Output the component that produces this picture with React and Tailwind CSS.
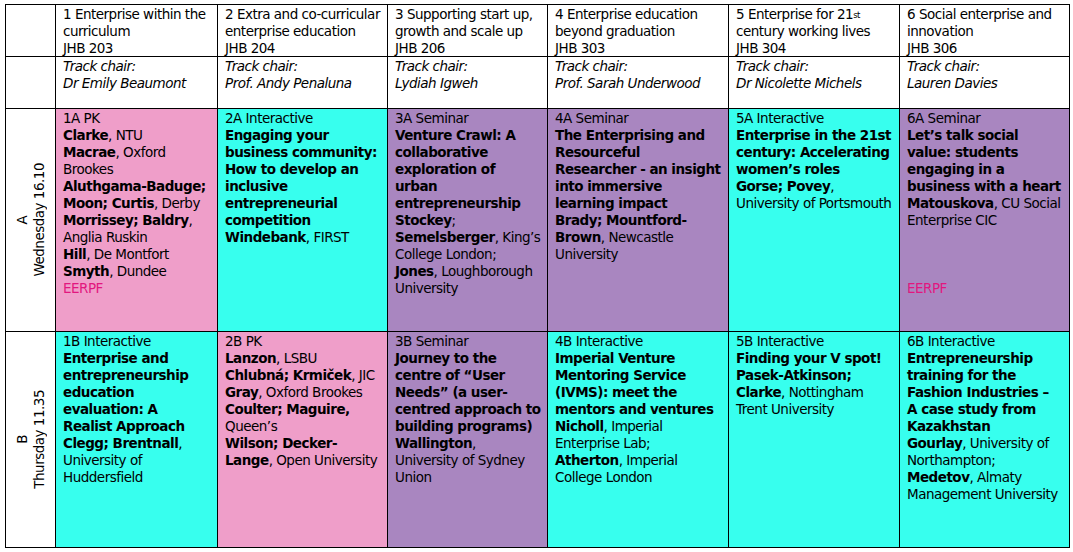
import React from "react";

const L = ({ children }) => <div className="whitespace-nowrap">{children}</div>;

const Cell = ({ bg, children, italic }) => (
  <div className={`${bg} pl-[7px] pr-[1px] pt-[1px] leading-[17px] overflow-hidden ${italic ? "italic" : ""}`}>
    {children}
  </div>
);

const Label = ({ a, b }) => (
  <div className="bg-white flex items-center justify-center">
    <div className="[writing-mode:vertical-rl] rotate-180 text-center leading-[17px] whitespace-nowrap">
      <div>{a}</div>
      <div>{b}</div>
    </div>
  </div>
);

const E = () => <div className="text-[#e2177f]">EERPF</div>;

const PINK = "bg-[#ef9ec9]";
const CYAN = "bg-[#37ffee]";
const PURPLE = "bg-[#a986c0]";
const WHITE = "bg-white";

export default function App() {
  return (
    <div className="w-[1073px] h-[552px] bg-white pt-[4px] pl-[5px] text-[13.5px] tracking-[-0.5px] text-black font-['DejaVu_Sans',sans-serif]">
      <div className="grid w-fit grid-cols-[49px_161px_169px_159px_180px_170px_169px] grid-rows-[51px_51px_222px_215px] gap-px bg-black border border-black">
        {/* header row */}
        <div className="bg-white" />
        <Cell bg={WHITE}>
          <L>1 Enterprise within the</L>
          <L>curriculum</L>
          <L>JHB 203</L>
        </Cell>
        <Cell bg={WHITE}>
          <L>2 Extra and co-curricular</L>
          <L>enterprise education</L>
          <L>JHB 204</L>
        </Cell>
        <Cell bg={WHITE}>
          <L>3 Supporting start up,</L>
          <L>growth and scale up</L>
          <L>JHB 206</L>
        </Cell>
        <Cell bg={WHITE}>
          <L>4 Enterprise education</L>
          <L>beyond graduation</L>
          <L>JHB 303</L>
        </Cell>
        <Cell bg={WHITE}>
          <L>
            5 Enterprise for 21<sup className="text-[8.5px] relative top-[-1px]">st</sup>
          </L>
          <L>century working lives</L>
          <L>JHB 304</L>
        </Cell>
        <Cell bg={WHITE}>
          <L>6 Social enterprise and</L>
          <L>innovation</L>
          <L>JHB 306</L>
        </Cell>

        {/* track chairs */}
        <div className="bg-white" />
        <Cell bg={WHITE} italic>
          <L>Track chair:</L>
          <L>Dr Emily Beaumont</L>
        </Cell>
        <Cell bg={WHITE} italic>
          <L>Track chair:</L>
          <L>Prof. Andy Penaluna</L>
        </Cell>
        <Cell bg={WHITE} italic>
          <L>Track chair:</L>
          <L>Lydiah Igweh</L>
        </Cell>
        <Cell bg={WHITE} italic>
          <L>Track chair:</L>
          <L>Prof. Sarah Underwood</L>
        </Cell>
        <Cell bg={WHITE} italic>
          <L>Track chair:</L>
          <L>Dr Nicolette Michels</L>
        </Cell>
        <Cell bg={WHITE} italic>
          <L>Track chair:</L>
          <L>Lauren Davies</L>
        </Cell>

        {/* Row A */}
        <Label a="A" b="Wednesday 16.10" />
        <Cell bg={PINK}>
          <L>1A PK</L>
          <L><b>Clarke</b>, NTU</L>
          <L><b>Macrae</b>, Oxford</L>
          <L>Brookes</L>
          <L><b>Aluthgama-Baduge;</b></L>
          <L><b>Moon; Curtis</b>, Derby</L>
          <L><b>Morrissey; Baldry</b>,</L>
          <L>Anglia Ruskin</L>
          <L><b>Hill</b>, De Montfort</L>
          <L><b>Smyth</b>, Dundee</L>
          <E />
        </Cell>
        <Cell bg={CYAN}>
          <L>2A Interactive</L>
          <L><b>Engaging your</b></L>
          <L><b>business community:</b></L>
          <L><b>How to develop an</b></L>
          <L><b>inclusive</b></L>
          <L><b>entrepreneurial</b></L>
          <L><b>competition</b></L>
          <L><b>Windebank</b>, FIRST</L>
        </Cell>
        <Cell bg={PURPLE}>
          <L>3A Seminar</L>
          <L><b>Venture Crawl: A</b></L>
          <L><b>collaborative</b></L>
          <L><b>exploration of</b></L>
          <L><b>urban</b></L>
          <L><b>entrepreneurship</b></L>
          <L><b>Stockey</b>;</L>
          <L><b>Semelsberger</b>, King’s</L>
          <L>College London;</L>
          <L><b>Jones</b>, Loughborough</L>
          <L>University</L>
        </Cell>
        <Cell bg={PURPLE}>
          <L>4A Seminar</L>
          <L><b>The Enterprising and</b></L>
          <L><b>Resourceful</b></L>
          <L><b>Researcher - an insight</b></L>
          <L><b>into immersive</b></L>
          <L><b>learning impact</b></L>
          <L><b>Brady; Mountford-</b></L>
          <L><b>Brown</b>, Newcastle</L>
          <L>University</L>
        </Cell>
        <Cell bg={CYAN}>
          <L>5A Interactive</L>
          <L><b>Enterprise in the 21st</b></L>
          <L><b>century: Accelerating</b></L>
          <L><b>women’s roles</b></L>
          <L><b>Gorse; Povey</b>,</L>
          <L>University of Portsmouth</L>
        </Cell>
        <Cell bg={PURPLE}>
          <L>6A Seminar</L>
          <L><b>Let’s talk social</b></L>
          <L><b>value: students</b></L>
          <L><b>engaging in a</b></L>
          <L><b>business with a heart</b></L>
          <L><b>Matouskova</b>, CU Social</L>
          <L>Enterprise CIC</L>
          <div className="h-[51px]" />
          <E />
        </Cell>

        {/* Row B */}
        <Label a="B" b="Thursday 11.35" />
        <Cell bg={CYAN}>
          <L>1B Interactive</L>
          <L><b>Enterprise and</b></L>
          <L><b>entrepreneurship</b></L>
          <L><b>education</b></L>
          <L><b>evaluation: A</b></L>
          <L><b>Realist Approach</b></L>
          <L><b>Clegg; Brentnall</b>,</L>
          <L>University of</L>
          <L>Huddersfield</L>
        </Cell>
        <Cell bg={PINK}>
          <L>2B PK</L>
          <L><b>Lanzon</b>, LSBU</L>
          <L><b>Chlubná; Krmiček</b>, JIC</L>
          <L><b>Gray</b>, Oxford Brookes</L>
          <L><b>Coulter; Maguire,</b></L>
          <L>Queen’s</L>
          <L><b>Wilson; Decker-</b></L>
          <L><b>Lange</b>, Open University</L>
        </Cell>
        <Cell bg={PURPLE}>
          <L>3B Seminar</L>
          <L><b>Journey to the</b></L>
          <L><b>centre of “User</b></L>
          <L><b>Needs” (a user-</b></L>
          <L><b>centred approach to</b></L>
          <L><b>building programs)</b></L>
          <L><b>Wallington</b>,</L>
          <L>University of Sydney</L>
          <L>Union</L>
        </Cell>
        <Cell bg={CYAN}>
          <L>4B Interactive</L>
          <L><b>Imperial Venture</b></L>
          <L><b>Mentoring Service</b></L>
          <L><b>(IVMS): meet the</b></L>
          <L><b>mentors and ventures</b></L>
          <L><b>Nicholl</b>, Imperial</L>
          <L>Enterprise Lab;</L>
          <L><b>Atherton</b>, Imperial</L>
          <L>College London</L>
        </Cell>
        <Cell bg={CYAN}>
          <L>5B Interactive</L>
          <L><b>Finding your V spot!</b></L>
          <L><b>Pasek-Atkinson;</b></L>
          <L><b>Clarke</b>, Nottingham</L>
          <L>Trent University</L>
        </Cell>
        <Cell bg={CYAN}>
          <L>6B Interactive</L>
          <L><b>Entrepreneurship</b></L>
          <L><b>training for the</b></L>
          <L><b>Fashion Industries –</b></L>
          <L><b>A case study from</b></L>
          <L><b>Kazakhstan</b></L>
          <L><b>Gourlay</b>, University of</L>
          <L>Northampton;</L>
          <L><b>Medetov</b>, Almaty</L>
          <L>Management University</L>
        </Cell>
      </div>
    </div>
  );
}
